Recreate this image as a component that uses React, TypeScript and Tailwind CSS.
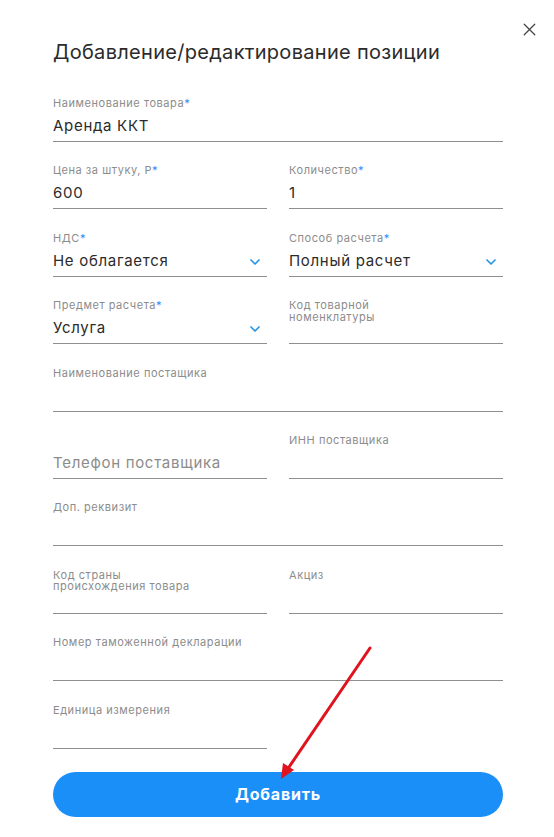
import { X, ChevronDown } from "lucide-react";

type FieldProps = {
  label?: string;
  required?: boolean;
  value?: string;
  placeholder?: string;
  select?: boolean;
  className?: string;
};

function Field({ label, required, value, placeholder, select, className = "" }: FieldProps) {
  return (
    <div className={`flex flex-col ${className}`}>
      <div className="h-[15px] pt-[2px] text-[11px] leading-[11.5px] tracking-[0.55px] text-[#8c8c8c] whitespace-pre-line">
        {label}
        {required && <span className="text-[#1a8ffa]">*</span>}
      </div>
      <div className="h-[31px] flex items-center justify-between border-b border-[#8f8f8f]">
        {value ? (
          <span className="text-[15px] text-[#2b2b2b] tracking-[0.7px]">{value}</span>
        ) : (
          <span className="text-[15px] text-[#8c8c8c] tracking-[0.7px]">{placeholder}</span>
        )}
        {select && <ChevronDown size={16} strokeWidth={2.6} className="text-[#2795e6] mr-[4px] mt-[2px]" />}
      </div>
    </div>
  );
}

export default function App() {
  return (
    <div
      className="relative w-[554px] h-[837px] bg-white overflow-hidden"
      style={{ fontFamily: "Inter, 'Noto Sans', sans-serif" }}
    >
      {/* close */}
      <button className="absolute top-[19px] right-[14px] text-[#444]">
        <X size={21} strokeWidth={1.5} />
      </button>

      <div className="px-[53px] pt-[39px] pr-[51px]">
        <h1 className="text-[20px] leading-[26px] text-[#2b2b2b] tracking-[0.3px]">
          Добавление/редактирование позиции
        </h1>

        <div className="grid grid-cols-2 gap-x-[22px] gap-y-[21.4px] mt-[31px]">
          <Field className="col-span-2" label="Наименование товара" required value="Аренда ККТ" />
          <Field label="Цена за штуку, Р" required value="600" />
          <Field label="Количество" required value="1" />
          <Field label="НДС" required value="Не облагается" select />
          <Field label="Способ расчета" required value="Полный расчет" select />
          <Field label="Предмет расчета" required value="Услуга" select />
          <Field label={"Код товарной\nноменклатуры"} />
          <Field className="col-span-2" label="Наименование постащика" />
          <Field placeholder="Телефон поставщика" />
          <Field label="ИНН поставщика" />
          <Field className="col-span-2" label="Доп. реквизит" />
          <Field label={"Код страны\nпроисхождения товара"} />
          <Field label="Акциз" />
          <Field className="col-span-2" label="Номер таможенной декларации" />
          <Field label="Единица измерения" />
        </div>

        <button className="mt-[23px] w-full h-[45px] rounded-full bg-[#1b8ff8] text-white text-[16px] font-bold tracking-[0.8px]">
          Добавить
        </button>
      </div>

      {/* annotation arrow */}
      <svg className="absolute left-0 top-0 pointer-events-none" width="554" height="837">
        <line x1="370" y1="648" x2="287" y2="770" stroke="#e0141e" strokeWidth="3" strokeLinecap="round" />
        <polygon points="281,779 283,763 294,770" fill="#e0141e" />
      </svg>
    </div>
  );
}
